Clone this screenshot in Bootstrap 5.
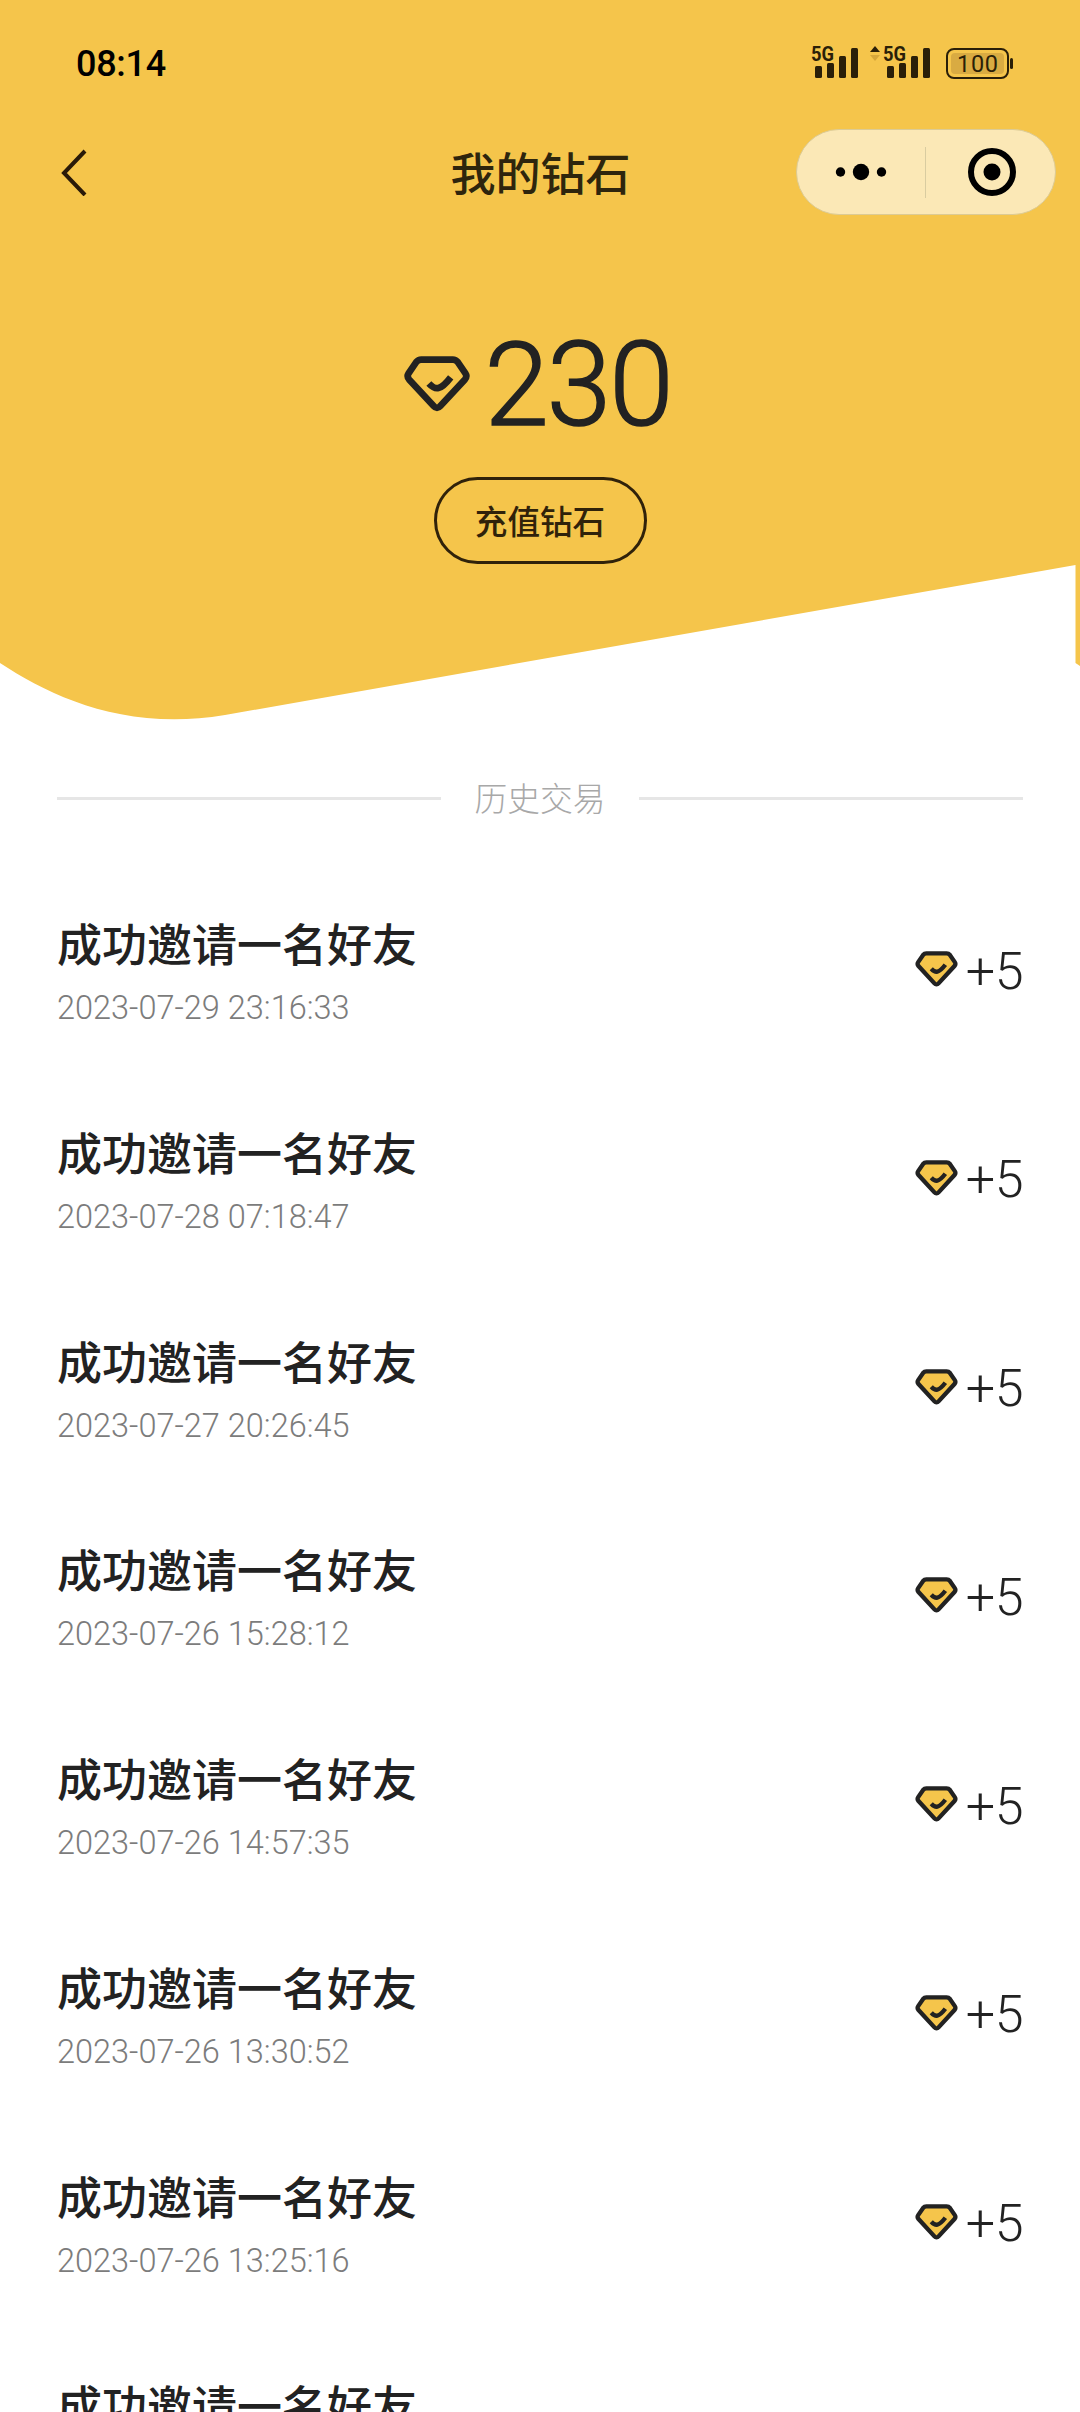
<!DOCTYPE html>
<html lang="zh-CN">
<head>
<meta charset="utf-8">
<meta name="viewport" content="width=device-width, initial-scale=1">
<title>我的钻石</title>
<link rel="stylesheet" href="https://cdn.jsdelivr.net/npm/bootstrap@5.3.0/dist/css/bootstrap.min.css">
<style>
  body { font-family: Roboto, "Noto Sans CJK SC", sans-serif; color: #222; background: #fff; }
  .phone { width: 1080px; height: 2412px; }
  .hero { height: 726px; }
  .hero-shape { z-index: 0; }
  .hero > :not(.hero-shape) { position: relative; z-index: 1; }
  .statusbar { height: 129px; padding: 0 62px 4px 76px; }
  .clock { font: 500 36px/1 Roboto, sans-serif; color: #000; padding-top: 2px; letter-spacing: -.3px; }
  .status-icons { overflow: visible; }
  .status-icons text { font-family: Roboto, sans-serif; fill: #2a1f08; }
  .titlebar { height: 86px; padding: 0 24px 0 60px; }
  .page-title { font: 500 45px/1 "Noto Sans CJK SC", sans-serif; color: #2e250d; padding: 0 35px 2px 0; }
  .side { width: 260px; }
  .capsule { width: 260px; height: 86px; background: #fbe8b6; border: 1px solid #dccb95; padding-right: 2px; }
  .capsule-rule { width: 1px; height: 51px; background: #d9cca0; }
  .balance { height: 110px; margin-top: 114px; gap: 14px; padding-right: 4px; }
  .balance-num { font: 300 116px/110px Roboto, sans-serif; letter-spacing: -2px; color: #222; padding-top: 2px; -webkit-text-stroke: 1.6px #222; }
  .recharge { width: 213px; height: 87px; margin-top: 38px; border: 3px solid #30220a; color: #30220a;
    font: 500 32.6px/1 "Noto Sans CJK SC", sans-serif; --bs-btn-hover-color: #30220a; }
  .history-head { height: 46px; margin: 49px 57px 0; gap: 33px; }
  .history-head span { font: 300 32.800px/44px "Noto Sans CJK SC", sans-serif; color: #a8a8a8; padding-bottom: 2px; }
  .rule { height: 3px; background: #e6e6e6; }
  .records { padding: 63px 57px 0; }
  .record { height: 208.8px; }
  .record-title { font: 500 45px/60px "Noto Sans CJK SC", sans-serif; color: #222; margin-top: 29px; }
  .record-time { font: 300 32.5px/40px Roboto, sans-serif; color: #7c7c7c; margin-top: 15px; }
  .gain { height: 60px; margin-top: 55px; gap: 8px; }
  .gain-num { font: 300 52px/60px Roboto, sans-serif; color: #222; letter-spacing: -.5px; padding-top: 5px; }
</style>
</head>
<body>
<svg width="0" height="0" class="position-absolute" aria-hidden="true">
  <symbol id="gem" viewBox="0 0 65 55">
    <path d="M17 3.5H48Q51 3.5 53 6L60.5 17Q62.500 20 60 23L36 49Q32.500 53 29 49L5 23Q2.500 20 4.500 17L12 6Q14 3.500 17 3.500Z" stroke="#222" stroke-width="6.600"/>
    <path d="M24.500 27C31 34 36 34 46 21" fill="none" stroke="#222" stroke-width="6.600"/>
  </symbol>
</svg>
<div class="phone position-relative overflow-hidden">
  <header class="hero position-relative">
    <svg class="hero-shape position-absolute top-0 start-0" width="1080" height="726" aria-hidden="true">
      <path fill="#f5c54b" d="M0 0H1080V666L1075.500 663V565L225 715C125 732 50 696 0 663Z"/>
    </svg>
    <div class="statusbar d-flex justify-content-between align-items-center">
      <div class="clock">08:14</div>
      <svg class="status-icons" width="207" height="36" viewBox="-3 0 207 36">
        <g fill="#2a1f08">
          <text x="-3" y="16" font-size="20.500" font-weight="700" textLength="23" lengthAdjust="spacingAndGlyphs">5G</text>
          <rect x="1" y="21" width="7" height="12" rx="1.500"/><rect x="13" y="18" width="7" height="15" rx="1.500"/><rect x="25" y="11" width="7" height="22" rx="1.500"/><rect x="37" y="3" width="7" height="30" rx="1.500"/>
          <path d="M56 7L61 1L66 7Z"/><path fill="#d6a73a" d="M56 10L61 16L66 10Z"/>
          <text x="69" y="16" font-size="20.500" font-weight="700" textLength="23" lengthAdjust="spacingAndGlyphs">5G</text>
          <rect x="73" y="21" width="7" height="12" rx="1.500"/><rect x="85" y="18" width="7" height="15" rx="1.500"/><rect x="97" y="11" width="7" height="22" rx="1.500"/><rect x="109" y="3" width="7" height="30" rx="1.500"/>
          <rect x="133" y="4" width="61" height="29" rx="7" fill="none" stroke="#2a1f08" stroke-width="2"/>
          <rect x="137" y="8" width="53" height="21" rx="4" fill="#d9ab42"/>
          <rect x="196" y="13" width="3" height="11" rx="1.500"/>
          <text x="143" y="27" font-size="23.500" textLength="41">100</text>
        </g>
      </svg>
    </div>
    <nav class="titlebar d-flex align-items-center">
      <div class="side">
        <svg class="d-block" width="30" height="48" viewBox="0 0 30 48"><path d="M25 3L4 25L25 47" fill="none" stroke="#2a1a08" stroke-width="4"/></svg>
      </div>
      <h1 class="page-title flex-grow-1 text-center mb-0">我的钻石</h1>
      <div class="capsule rounded-pill d-flex align-items-center">
        <div class="w-50 d-flex justify-content-center">
          <svg width="52" height="18"><circle cx="5.500" cy="9" r="4.700"/><circle cx="26" cy="9" r="8.200"/><circle cx="46.500" cy="9" r="4.700"/></svg>
        </div>
        <div class="capsule-rule"></div>
        <div class="w-50 d-flex justify-content-center">
          <svg width="56" height="50"><circle cx="31" cy="25" r="21" fill="none" stroke="#000" stroke-width="6"/><circle cx="31" cy="25" r="8.500"/></svg>
        </div>
      </div>
    </nav>
    <div class="balance d-flex justify-content-center align-items-center">
      <svg width="66" height="56" fill="none"><use href="#gem"/></svg>
      <div class="balance-num">230</div>
    </div>
    <div class="d-flex justify-content-center">
      <button class="recharge btn rounded-pill p-0" type="button">充值钻石</button>
    </div>
  </header>
  <div class="history-head d-flex align-items-center">
    <div class="rule flex-grow-1"></div><span>历史交易</span><div class="rule flex-grow-1"></div>
  </div>
  <ul class="records list-unstyled mb-0">
    <li class="record d-flex justify-content-between"><div><div class="record-title">成功邀请一名好友</div><div class="record-time">2023-07-29 23:16:33</div></div><div class="gain d-flex align-items-center"><svg width="43" height="36" fill="#f5c54b"><use href="#gem"/></svg><span class="gain-num">+5</span></div></li>
    <li class="record d-flex justify-content-between"><div><div class="record-title">成功邀请一名好友</div><div class="record-time">2023-07-28 07:18:47</div></div><div class="gain d-flex align-items-center"><svg width="43" height="36" fill="#f5c54b"><use href="#gem"/></svg><span class="gain-num">+5</span></div></li>
    <li class="record d-flex justify-content-between"><div><div class="record-title">成功邀请一名好友</div><div class="record-time">2023-07-27 20:26:45</div></div><div class="gain d-flex align-items-center"><svg width="43" height="36" fill="#f5c54b"><use href="#gem"/></svg><span class="gain-num">+5</span></div></li>
    <li class="record d-flex justify-content-between"><div><div class="record-title">成功邀请一名好友</div><div class="record-time">2023-07-26 15:28:12</div></div><div class="gain d-flex align-items-center"><svg width="43" height="36" fill="#f5c54b"><use href="#gem"/></svg><span class="gain-num">+5</span></div></li>
    <li class="record d-flex justify-content-between"><div><div class="record-title">成功邀请一名好友</div><div class="record-time">2023-07-26 14:57:35</div></div><div class="gain d-flex align-items-center"><svg width="43" height="36" fill="#f5c54b"><use href="#gem"/></svg><span class="gain-num">+5</span></div></li>
    <li class="record d-flex justify-content-between"><div><div class="record-title">成功邀请一名好友</div><div class="record-time">2023-07-26 13:30:52</div></div><div class="gain d-flex align-items-center"><svg width="43" height="36" fill="#f5c54b"><use href="#gem"/></svg><span class="gain-num">+5</span></div></li>
    <li class="record d-flex justify-content-between"><div><div class="record-title">成功邀请一名好友</div><div class="record-time">2023-07-26 13:25:16</div></div><div class="gain d-flex align-items-center"><svg width="43" height="36" fill="#f5c54b"><use href="#gem"/></svg><span class="gain-num">+5</span></div></li>
    <li class="record d-flex justify-content-between"><div><div class="record-title">成功邀请一名好友</div></div></li>
  </ul>
</div>
<script src="https://cdn.jsdelivr.net/npm/bootstrap@5.3.0/dist/js/bootstrap.bundle.min.js"></script>
</body>
</html>
